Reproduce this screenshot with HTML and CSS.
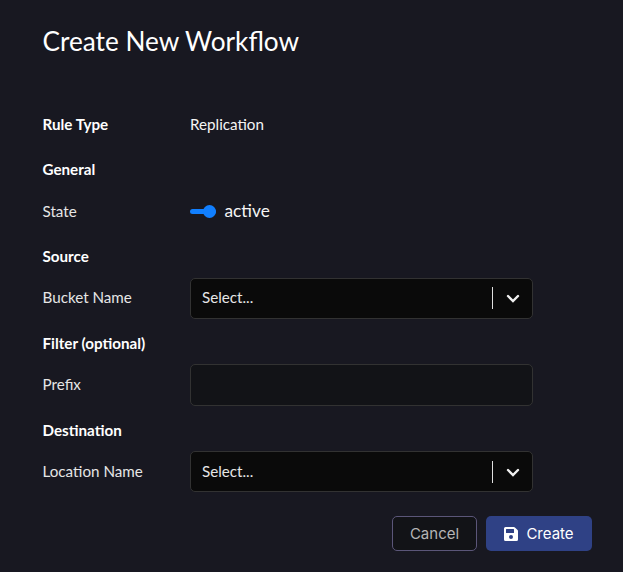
FILE: index.html
```html
<!DOCTYPE html>
<html lang="en">
<head>
<meta charset="utf-8">
<title>Create New Workflow</title>
<link rel="stylesheet" href="styles.css">
</head>
<body>
<form class="workflow">
  <h1 class="title">Create New Workflow</h1>
  <div class="fields">
    <strong>Rule Type</strong><span class="value">Replication</span>
    <strong class="section">General</strong>
    <span>State</span>
    <div class="state"><span class="toggle"><span class="knob"></span></span><span class="status">active</span></div>
    <strong class="section">Source</strong>
    <span class="raised">Bucket Name</span>
    <div class="select"><span class="placeholder raised">Select...</span><span class="divider high"></span>
      <svg class="chevron" viewBox="0 0 14 9"><path d="M2 2l5 5 5-5"/></svg></div>
    <strong class="section spaced">Filter (optional)</strong>
    <span>Prefix</span>
    <div class="input"></div>
    <strong class="section spaced">Destination</strong>
    <span>Location Name</span>
    <div class="select low"><span class="placeholder">Select...</span><span class="divider"></span>
      <svg class="chevron" viewBox="0 0 14 9"><path d="M2 2l5 5 5-5"/></svg></div>
  </div>
  <div class="actions">
    <button type="button" class="button cancel">Cancel</button>
    <button type="button" class="button create"><svg class="save" viewBox="0 0 448 448"><path fill-rule="evenodd" d="M434 98L350 14A48 48 0 0 0 316 0H48A48 48 0 0 0 0 48V400A48 48 0 0 0 48 448H400A48 48 0 0 0 448 400V132A48 48 0 0 0 434 98ZM224 384A64 64 0 1 1 224 256A64 64 0 0 1 224 384ZM320 80V180A12 12 0 0 1 308 192H76A12 12 0 0 1 64 180V76A12 12 0 0 1 76 64H304Q320 64 320 80Z"/></svg>Create</button>
  </div>
</form>
</body>
</html>
```
FILE: styles.css
```css
* { box-sizing: border-box; }
body {
  margin: 0;
  background: #181821;
  color: #e6e6e6;
  font: 15.2px/20px Lato, Carlito, sans-serif;
}
.workflow { height: 572px; padding: 20px 31px 0 42.5px; }
.title {
  margin: 0;
  height: 77px;
  color: #fff;
  font-size: 26.2px;
  font-weight: 400;
  line-height: 42px;
}
.fields {
  display: grid;
  grid-template-columns: 147.5px 343px;
  grid-template-rows: 56px 34px 49px 42px 41px 45px 42px 45px 41px;
  align-items: center;
}
.fields > strong, .fields > span, .placeholder, .status { padding-bottom: 2px; }
.fields strong { color: #fff; }
.fields > .section { grid-column: 1 / -1; }
.fields > .spaced { padding-top: 5px; }
.fields .raised { padding-bottom: 3px; }
.value { color: #f5f5f5; }
.state {
  display: flex;
  align-items: center;
  gap: 8.5px;
  color: #f5f5f5;
  font-size: 17.3px;
}
.toggle {
  display: flex;
  align-items: center;
  justify-content: flex-end;
  width: 26px;
  height: 5px;
  border-radius: 3px;
  background: #117fff;
}
.knob { width: 13px; height: 13px; border-radius: 50%; background: #117fff; }
.select, .input {
  height: 100%;
  border: 1px solid #323232;
  border-radius: 5px;
}
.select {
  display: flex;
  align-items: center;
  padding: 0 12px 0 11px;
  background: #0a0a0a;
}
.placeholder { flex: 1; }
.divider { width: 1px; height: 22px; margin-top: 1px; background: #e0e0e0; }
.high { margin: 0 0 1px; }
.low .chevron { margin-top: 1px; }
.chevron {
  width: 14px;
  height: 9px;
  margin-left: 13px;
  fill: none;
  stroke: #f0f0f0;
  stroke-width: 2.4;
  stroke-linecap: round;
}
.input { background: #121317; }
.actions { display: flex; justify-content: flex-end; gap: 9px; margin-top: 24px; }
.button {
  display: flex;
  align-items: center;
  justify-content: center;
  height: 35px;
  padding: 0;
  border: 0;
  border-radius: 5px;
  font: 15px/20px Inter, sans-serif;
}
.cancel { width: 85px; border: 1px solid #5b5679; background: #121317; color: #b5b5b5; }
.create { width: 106px; gap: 8px; background: #2f4185; color: #fff; }
.save { width: 14px; height: 14px; fill: #fff; }
```
